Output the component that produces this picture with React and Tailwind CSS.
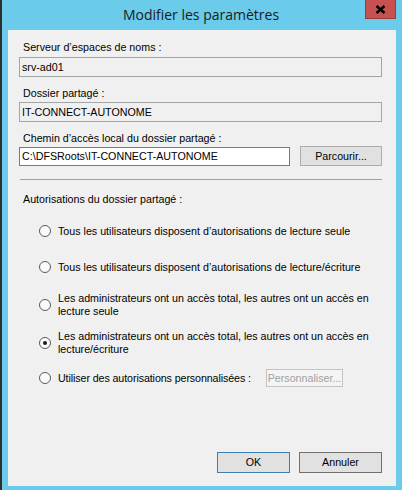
const font = { fontFamily: '"Liberation Sans", Arial, sans-serif' }

function Radio({ checked }) {
  return (
    <span className="w-[12px] h-[12px] shrink-0 rounded-full border border-[#5a5a5a] bg-[#fbfbfb] flex items-center justify-center">
      {checked && <span className="w-[4px] h-[4px] rounded-full bg-[#1a1a1a]" />}
    </span>
  )
}

function Option({ checked, children, two }) {
  return (
    <div className={`flex items-center pl-[20px] ${two ? 'h-[28px]' : 'h-[14px]'}`}>
      <Radio checked={checked} />
      <span className="ml-[7px] leading-[13px] whitespace-nowrap">{children}</span>
    </div>
  )
}

export default function App() {
  return (
    <div className="w-[402px] h-[490px] flex bg-[#6acbea] text-[10.7px] text-black" style={font}>
      <div className="w-[2px] bg-[#2e2e2e]" />
      <div className="flex-1 flex flex-col">
        <div className="h-[29px] flex items-start">
          <div className="flex-1 pl-[35px] pt-[4px] text-center text-[14px] text-[#1b1b1b]" style={{ fontFamily: '"Open Sans", "Noto Sans", sans-serif' }}>
            Modifier les paramètres
          </div>
          <div className="w-[31px] h-[19px] mr-[6px] bg-[#c75050] border border-[#9b3c3c] border-t-0 flex items-center justify-center">
            <svg width="11" height="9" viewBox="0 0 11 9">
              <path d="M1.5 1 L9.5 8 M9.5 1 L1.5 8" stroke="#000" strokeWidth="2.4" />
            </svg>
          </div>
        </div>
        <div className="flex-1 ml-[6px] mr-[6px] mb-[4px] bg-[#f0f0f0] border-t border-[#9fb9c5] flex flex-col pl-[11px] pr-[14px]">
          <div className="mt-[10px] pl-[4px] leading-[14px]">Serveur d’espaces de noms :</div>
          <div className="mt-[3px] h-[20px] border border-[#a5a5a5] bg-[#f0f0f0] flex items-center pl-[2px]">srv-ad01</div>
          <div className="mt-[9px] pl-[4px] leading-[14px]">Dossier partagé :</div>
          <div className="mt-[2px] h-[20px] border border-[#a5a5a5] bg-[#f0f0f0] flex items-center pl-[2px]">IT-CONNECT-AUTONOME</div>
          <div className="mt-[9px] pl-[4px] leading-[14px]">Chemin d’accès local du dossier partagé :</div>
          <div className="mt-[1px] flex items-center">
            <div className="w-[271px] h-[19px] border border-[#7a7a7a] bg-white flex items-center pl-[2px]">C:\DFSRoots\IT-CONNECT-AUTONOME</div>
            <div className="ml-auto w-[82px] h-[20px] border border-[#adadad] bg-[#e1e1e1] flex items-center justify-center">Parcourir...</div>
          </div>
          <div className="mt-[13px] ml-[1px] h-px bg-[#a0a0a0]" />
          <div className="mt-[12px] pl-[4px] leading-[14px]">Autorisations du dossier partagé :</div>
          <div className="mt-[18px] flex flex-col">
            <Option>Tous les utilisateurs disposent d’autorisations de lecture seule</Option>
            <div className="h-[22px]" />
            <Option>Tous les utilisateurs disposent d’autorisations de lecture/écriture</Option>
            <div className="h-[17px]" />
            <Option two>
              Les administrateurs ont un accès total, les autres ont un accès en
              <br />
              lecture seule
            </Option>
            <div className="h-[10px]" />
            <Option checked two>
              Les administrateurs ont un accès total, les autres ont un accès en
              <br />
              lecture/écriture
            </Option>
            <div className="h-[12px]" />
            <div className="flex items-center pl-[20px] h-[18px]">
              <Radio />
              <span className="ml-[7px] w-[192px] whitespace-nowrap tracking-[-0.1px]">Utiliser des autorisations personnalisées :</span>
              <div className="ml-[16px] w-[77px] h-[18px] border border-[#c4c4c4] bg-[#f4f4f4] text-[#a0a0a0] flex items-center justify-center">Personnaliser...</div>
            </div>
          </div>
          <div className="mt-auto mb-[13px] flex justify-end gap-[9px]">
            <div className="w-[73px] h-[21px] border border-[#3c7fb1] bg-[#e1e1e1] flex items-center justify-center">OK</div>
            <div className="w-[83px] h-[21px] border border-[#707070] bg-[#e1e1e1] flex items-center justify-center">Annuler</div>
          </div>
        </div>
      </div>
    </div>
  )
}
